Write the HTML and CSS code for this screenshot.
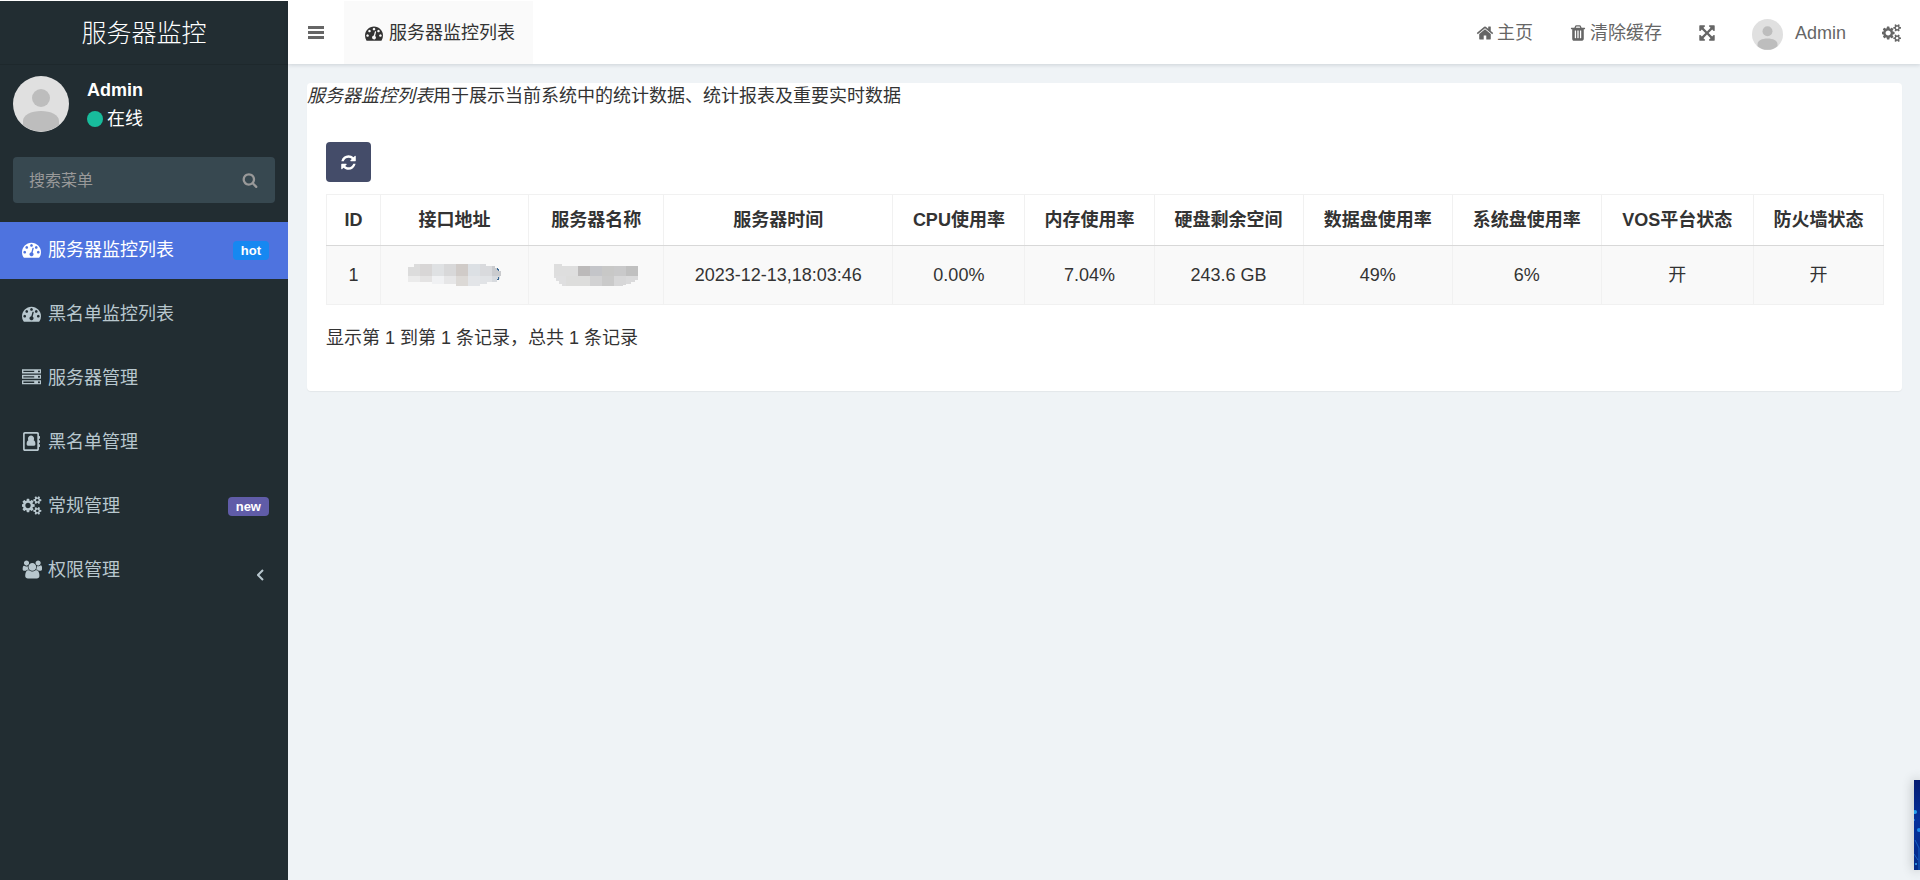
FILE: index.html
```html
<!DOCTYPE html>
<html lang="zh-CN">
<head>
<meta charset="utf-8">
<title>服务器监控</title>
<link rel="stylesheet" href="styles.css">
</head>
<body>
<svg class="sprite" aria-hidden="true">
  <symbol id="i-dash" viewBox="0 0 1792 1792"><path d="M384 1152q0-53-37.5-90.5t-90.5-37.5-90.5 37.5-37.5 90.5 37.5 90.5 90.5 37.5 90.5-37.5 37.5-90.5zm192-448q0-53-37.5-90.5t-90.5-37.5-90.5 37.5-37.5 90.5 37.5 90.5 90.5 37.5 90.5-37.5 37.5-90.5zm428 481l101-382q6-26-7.5-48.5t-38.5-29.5-48 6.5-30 39.5l-101 382q-60 5-107 43.5t-63 98.5q-20 77 20 146t117 89 146-20 89-117q16-60-6-117t-72-91zm660-33q0-53-37.5-90.5t-90.5-37.5-90.5 37.5-37.5 90.5 37.5 90.5 90.5 37.5 90.5-37.5 37.5-90.5zm-640-640q0-53-37.5-90.5t-90.5-37.5-90.5 37.5-37.5 90.5 37.5 90.5 90.5 37.5 90.5-37.5 37.5-90.5zm448 192q0-53-37.5-90.5t-90.5-37.5-90.5 37.5-37.5 90.5 37.5 90.5 90.5 37.5 90.5-37.5 37.5-90.5zm320 448q0 261-141 483-19 29-54 29h-1402q-35 0-54-29-141-221-141-483 0-182 71-348t191-286 286-191 348-71 348 71 286 191 191 286 71 348z"/></symbol>
  <symbol id="i-server" viewBox="0 0 1792 1792"><path d="M128 1408h1024v-128h-1024v128zm0-512h1024v-128h-1024v128zm1568 448q0-40-28-68t-68-28-68 28-28 68 28 68 68 28 68-28 28-68zm-1568-960h1024v-128h-1024v128zm1568 448q0-40-28-68t-68-28-68 28-28 68 28 68 68 28 68-28 28-68zm0-512q0-40-28-68t-68-28-68 28-28 68 28 68 68 28 68-28 28-68zm96 832v384h-1792v-384h1792zm0-512v384h-1792v-384h1792zm0-512v384h-1792v-384h1792z"/></symbol>
  <symbol id="i-book" viewBox="0 0 1792 1792"><path fill-rule="evenodd" d="M260 0h1180q66 0 113 47t47 113v224h64q32 0 32 32v192q0 32-32 32h-64v128h64q32 0 32 32v192q0 32-32 32h-64v128h64q32 0 32 32v192q0 32-32 32h-64v224q0 66-47 113t-113 47h-1180q-66 0-113-47t-47-113v-1472q0-66 47-113t113-47zm28 170q-32 0-32 32v1388q0 32 32 32h1124q32 0 32-32v-1388q0-32-32-32z"/><path d="M850 340q120 0 205 85t85 205q0 80-42 146 80 30 122 130 46 104 46 260 0 136-126 136h-580q-126 0-126-136 0-156 46-260 42-100 122-130-42-66-42-146 0-120 85-205t205-85z"/></symbol>
  <symbol id="i-cogs" viewBox="0 0 1920 1792"><path d="M832 896q0-106-75-181t-181-75-181 75-75 181 75 181 181 75 181-75 75-181zm768 512q0-52-38-90t-90-38-90 38-38 90q0 53 37.5 90.5t90.5 37.5 90.5-37.5 37.5-90.5zm0-1024q0-52-38-90t-90-38-90 38-38 90q0 53 37.5 90.5t90.5 37.5 90.5-37.5 37.5-90.5zm-384 421v185q0 10-7 19.5t-16 10.5l-155 24q-11 35-32 76 34 48 90 115 7 11 7 20 0 12-7 19-23 30-82.5 89.5t-78.5 59.5q-11 0-21-7l-115-90q-37 19-77 31-11 108-23 155-7 24-30 24h-186q-11 0-20-7.5t-10-17.5l-23-153q-34-10-75-31l-118 89q-7 7-20 7-11 0-21-8-144-133-144-160 0-9 7-19 10-14 41-53t47-61q-23-44-35-82l-152-24q-10-1-17-9.5t-7-19.5v-185q0-10 7-19.5t16-10.5l155-24q11-35 32-76-34-48-90-115-7-11-7-20 0-12 7-20 22-30 82-89t79-59q11 0 21 7l115 90q34-18 77-32 11-108 23-154 7-24 30-24h186q11 0 20 7.5t10 17.5l23 153q34 10 75 31l118-89q8-7 20-7 11 0 21 8 144 133 144 160 0 8-7 19-12 16-42 54t-45 60q23 48 34 82l152 23q10 2 17 10.5t7 19.5zm640 533v140q0 16-149 31-12 27-30 52 51 113 51 138 0 4-4 7-122 71-124 71-8 0-46-47t-52-68q-20 2-30 2t-30-2q-14 21-52 68t-46 47q-2 0-124-71-4-3-4-7 0-25 51-138-18-25-30-52-149-15-149-31v-140q0-16 149-31 13-29 30-52-51-113-51-138 0-4 4-7 4-2 35-20t59-34 30-16q8 0 46 46.5t52 67.5q20-2 30-2t30 2q51-71 92-112l6-2q4 0 124 70 4 3 4 7 0 25-51 138 17 23 30 52 149 15 149 31zm0-1024v140q0 16-149 31-12 27-30 52 51 113 51 138 0 4-4 7-122 71-124 71-8 0-46-47t-52-68q-20 2-30 2t-30-2q-14 21-52 68t-46 47q-2 0-124-71-4-3-4-7 0-25 51-138-18-25-30-52-149-15-149-31v-140q0-16 149-31 13-29 30-52-51-113-51-138 0-4 4-7 4-2 35-20t59-34 30-16q8 0 46 46.5t52 67.5q20-2 30-2t30 2q51-71 92-112l6-2q4 0 124 70 4 3 4 7 0 25-51 138 17 23 30 52 149 15 149 31z"/></symbol>
  <symbol id="i-group" viewBox="0 0 1984 1792"><path d="M657 896q-162 5-265 128h-134q-82 0-138-40.5t-56-118.5q0-353 124-353 6 0 43.5 21t97.5 42.5 119 21.5q67 0 133-23-5 37-5 66 0 159 93 287zm1071 637q0 120-73 189.5t-194 69.5h-874q-121 0-194-69.5t-73-189.5q0-53 3.5-103.5t14-109 26.5-108.5 43-97.5 62-81 85.5-53.5 111.5-20q10 0 43 21.5t73 48 107 48 135 21.5 135-21.5 107-48 73-48 43-21.5q61 0 111.5 20t85.5 53.5 62 81 43 97.5 26.5 108.5 14 109 3.5 103.5zm-1024-1277q0 106-75 181t-181 75-181-75-75-181 75-181 181-75 181 75 75 181zm704 384q0 159-112.5 271.5t-271.5 112.5-271.5-112.5-112.5-271.5 112.5-271.5 271.5-112.5 271.5 112.5 112.5 271.5zm576 225q0 78-56 118.5t-138 40.5h-134q-103-123-265-128 93-128 93-287 0-29-5-66 66 23 133 23 59 0 119-21.5t97.5-42.5 43.5-21q124 0 124 353zm-128-609q0 106-75 181t-181 75-181-75-75-181 75-181 181-75 181 75 75 181z"/></symbol>
  <symbol id="i-search" viewBox="0 0 1792 1792"><path d="M1216 832q0-185-131.5-316.5t-316.5-131.5-316.5 131.5-131.5 316.5 131.5 316.5 316.5 131.5 316.5-131.5 131.5-316.5zm512 832q0 52-38 90t-90 38q-54 0-90-38l-343-342q-179 124-399 124-143 0-273.5-55.5t-225-150-150-225-55.5-273.5 55.5-273.5 150-225 225-150 273.5-55.5 273.5 55.5 225 150 150 225 55.5 273.5q0 220-124 399l343 343q37 37 37 90z"/></symbol>
  <symbol id="i-home" viewBox="0 0 1792 1792"><path d="M1472 992v480q0 26-19 45t-45 19h-384v-384h-256v384h-384q-26 0-45-19t-19-45v-480q0-1 .5-3t.5-3l575-474 575 474q1 2 1 6zm223-69l-62 74q-8 9-21 11h-3q-13 0-21-7l-692-577-692 577q-12 8-24 7-13-2-21-11l-62-74q-8-10-7-23.5t11-21.5l719-599q32-26 76-26t76 26l244 204v-195q0-14 9-23t23-9h192q14 0 23 9t9 23v408l219 182q10 8 11 21.5t-7 23.5z"/></symbol>
  <symbol id="i-trash" viewBox="0 0 1792 1792"><path d="M704 1376v-704q0-14-9-23t-23-9h-64q-14 0-23 9t-9 23v704q0 14 9 23t23 9h64q14 0 23-9t9-23zm256 0v-704q0-14-9-23t-23-9h-64q-14 0-23 9t-9 23v704q0 14 9 23t23 9h64q14 0 23-9t9-23zm256 0v-704q0-14-9-23t-23-9h-64q-14 0-23 9t-9 23v704q0 14 9 23t23 9h64q14 0 23-9t9-23zm-544-992h448l-48-117q-7-9-17-11h-317q-10 2-17 11zm928 32v64q0 14-9 23t-23 9h-96v948q0 83-47 143.5t-113 60.5h-832q-66 0-113-58.5t-47-141.5v-952h-96q-14 0-23-9t-9-23v-64q0-14 9-23t23-9h309l70-167q15-37 54-63t79-26h320q40 0 79 26t54 63l70 167h309q14 0 23 9t9 23z"/></symbol>
  <symbol id="i-arrows" viewBox="0 0 1792 1792"><path d="M1411 541l-355 355 355 355 144-144q29-31 70-14 39 17 39 59v448q0 26-19 45t-45 19h-448q-42 0-59-40-17-39 14-69l144-144-355-355-355 355 144 144q31 30 14 69-17 40-59 40h-448q-26 0-45-19t-19-45v-448q0-42 40-59 39-17 69 14l144 144 355-355-355-355-144 144q-19 19-45 19-12 0-24-5-40-17-40-59v-448q0-26 19-45t45-19h448q42 0 59 40 17 39-14 69l-144 144 355 355 355-355-144-144q-31-30-14-69 17-40 59-40h448q26 0 45 19t19 45v448q0 42-39 59-13 5-25 5-26 0-45-19z"/></symbol>
  <symbol id="i-refresh" viewBox="0 0 1792 1792"><path d="M1639 1056q0 5-1 7-64 268-268 434.5t-478 166.5q-146 0-282.5-55t-243.5-157l-129 129q-19 19-45 19t-45-19-19-45v-448q0-26 19-45t45-19h448q26 0 45 19t19 45-19 45l-137 137q71 66 161 102t187 36q134 0 250-65t186-179q11-17 53-117 8-23 30-23h192q13 0 22.5 9.5t9.5 22.5zm25-800v448q0 26-19 45t-45 19h-448q-26 0-45-19t-19-45 19-45l138-138q-148-137-349-137-134 0-250 65t-186 179q-11 17-53 117-8 23-30 23h-199q-13 0-22.5-9.5t-9.5-22.5v-7q65-268 270-434.5t480-166.5q146 0 284 55.5t245 156.5l130-129q19-19 45-19t45 19 19 45z"/></symbol>
  <symbol id="i-bars" viewBox="0 0 16 14"><path d="M0 0h16v3H0zM0 5h16v3H0zM0 10h16v3H0z"/></symbol>
  <symbol id="i-left" viewBox="0 0 8 12"><path d="M6 1L1 6l5 5" fill="none" stroke="currentColor" stroke-width="2"/></symbol>
  <symbol id="i-user" viewBox="0 0 56 56"><circle cx="28" cy="28" r="28" fill="#e0e0e0"/><circle cx="28" cy="22" r="9" fill="#bdbdbd"/><path d="M10 49V45C10 39 18 35 28 35s18 4 18 10v4A28 28 0 0 1 10 49z" fill="#bdbdbd"/></symbol>
</svg>
<div class="app">
  <aside class="sidebar">
    <a class="brand" href="#">服务器监控</a>
    <div class="profile">
      <svg class="avatar"><use href="#i-user"/></svg>
      <div class="who">
        <strong>Admin</strong>
        <span class="status"><i class="dot"></i>在线</span>
      </div>
    </div>
    <form class="search">
      <input type="text" placeholder="搜索菜单" aria-label="搜索菜单">
      <button type="button" aria-label="搜索"><svg class="icon"><use href="#i-search"/></svg></button>
    </form>
    <nav class="menu">
      <a class="active" href="#"><svg class="icon"><use href="#i-dash"/></svg>服务器监控列表<span class="badge hot">hot</span></a>
      <a href="#"><svg class="icon"><use href="#i-dash"/></svg>黑名单监控列表</a>
      <a href="#"><svg class="icon"><use href="#i-server"/></svg>服务器管理</a>
      <a href="#"><svg class="icon"><use href="#i-book"/></svg>黑名单管理</a>
      <a href="#"><svg class="icon wide"><use href="#i-cogs"/></svg>常规管理<span class="badge new">new</span></a>
      <a href="#"><svg class="icon wide"><use href="#i-group"/></svg>权限管理<svg class="caret"><use href="#i-left"/></svg></a>
    </nav>
  </aside>
  <div class="page">
    <header class="topbar">
      <button class="toggle" type="button" aria-label="切换菜单"><svg><use href="#i-bars"/></svg></button>
      <a class="tab" href="#"><svg class="icon"><use href="#i-dash"/></svg>服务器监控列表</a>
      <nav class="tools">
        <a href="#"><svg class="icon"><use href="#i-home"/></svg>主页</a>
        <a href="#"><svg class="icon"><use href="#i-trash"/></svg>清除缓存</a>
        <a href="#" aria-label="全屏"><svg class="icon"><use href="#i-arrows"/></svg></a>
        <a class="account" href="#"><svg class="avatar"><use href="#i-user"/></svg>Admin</a>
        <a href="#" aria-label="设置"><svg class="icon cogs"><use href="#i-cogs"/></svg></a>
      </nav>
    </header>
    <main class="panel">
      <p class="lead"><em>服务器监控列表</em>用于展示当前系统中的统计数据、统计报表及重要实时数据</p>
      <div class="content">
        <button class="refresh" type="button" aria-label="刷新"><svg><use href="#i-refresh"/></svg></button>
        <table>
          <colgroup><col class="c-id"><col class="c-url"><col class="c-name"><col class="c-time"><col class="c-cpu"><col class="c-mem"><col class="c-disk"><col class="c-disk"><col class="c-disk"><col class="c-vos"><col class="c-fw"></colgroup>
          <thead>
            <tr><th>ID</th><th>接口地址</th><th>服务器名称</th><th>服务器时间</th><th>CPU使用率</th><th>内存使用率</th><th>硬盘剩余空间</th><th>数据盘使用率</th><th>系统盘使用率</th><th>VOS平台状态</th><th>防火墙状态</th></tr>
          </thead>
          <tbody>
            <tr>
              <td>1</td>
              <td><svg class="mask-a" viewBox="0 0 93 22" shape-rendering="crispEdges">
                <path fill="#dcdcdc" d="M0 3h6V0h6v12H0z"/><path fill="#d8d6d6" d="M12 0h12v12H12z"/><path fill="#dfe1e3" d="M24 0h12v12H24z"/><path fill="#d8d8d9" d="M36 0h12v12H36z"/><path fill="#d0cbc8" d="M48 0h12v12H48z"/><path fill="#dce0e4" d="M60 0h12v12H60z"/><path fill="#d9dadd" d="M72 0h6v2h6v10H72z"/><path fill="#cacbce" d="M84 2h3v2h3v3h3v5h-9z"/>
                <path fill="#ebebeb" d="M0 12h12v6H0z"/><path fill="#e4e3e3" d="M12 12h12v6H12z"/><path fill="#f0f1f3" d="M24 12h12v8H24z"/><path fill="#e6e6e7" d="M36 12h12v8H36z"/><path fill="#dcd9d6" d="M48 12h12v10H48z"/><path fill="#e3e5e8" d="M60 12h12v10H60z"/><path fill="#e1e3e6" d="M72 12h12v6h-5v2h-7z"/><path fill="#d7dade" d="M84 12h8v3h-3v3h-5z"/><path fill="#3d6a94" d="M89 4h1v1h1v2h-1zM90 13h1v3h-2v-1h1z"/>
              </svg></td>
              <td><svg class="mask-b" viewBox="0 0 84 22" shape-rendering="crispEdges">
                <path fill="#dedede" d="M0 0h8v2h4v10H0zM12 2h12v10H12z"/><path fill="#bcbaba" d="M24 2h12v10H24z"/><path fill="#c4c5c9" d="M36 2h12v10H36z"/><path fill="#c8c8c7" d="M48 2h12v10H48z"/><path fill="#c9c9ca" d="M60 2h12v10H60z"/><path fill="#c0c0c0" d="M72 2h12v10H72z"/>
                <path fill="#dfdfe0" d="M0 12h12v10H8v-2H5v-3H2v-3H0z"/><path fill="#dddddc" d="M12 12h24v10H12z"/><path fill="#d2d2d3" d="M36 12h12v10H36z"/><path fill="#cacaca" d="M48 12h12v10H48z"/><path fill="#d7d7d8" d="M60 12h12v9h-3v1h-9z"/><path fill="#dadadb" d="M72 12h12v4h-3v2h-4v2h-5z"/>
              </svg></td>
              <td>2023-12-13,18:03:46</td><td>0.00%</td><td>7.04%</td><td>243.6 GB</td><td>49%</td><td>6%</td><td>开</td><td>开</td>
            </tr>
          </tbody>
        </table>
        <p class="count">显示第 1 到第 1 条记录，总共 1 条记录</p>
      </div>
    </main>
  </div>
</div>
<svg class="side-art" viewBox="0 0 6 90">
  <defs><linearGradient id="deep" x1="0" y1="0" x2="0" y2="1"><stop offset="0" stop-color="#071c72"/><stop offset=".45" stop-color="#04309c"/><stop offset="1" stop-color="#052b88"/></linearGradient></defs>
  <path fill="url(#deep)" d="M0 0h6v90H0z"/><circle cx="1" cy="32" r="2" fill="#25a0ee"/><circle cx="0" cy="40" r="1" fill="#2080dc"/><circle cx="5" cy="50" r="2" fill="#1e8bea"/><path d="M1 60l4 8v22M0 74l4 6" fill="none" stroke="#1762c4"/><circle cx="2" cy="84" r="1" fill="#39a9ef"/>
</svg>
</body>
</html>
```
FILE: styles.css
```css
* { box-sizing: border-box; }
body {
  margin: 0;
  border-top: 1px solid #fff;
  background: #eff3f6;
  color: #333;
  font: 18px/26px "Liberation Sans", "Noto Sans CJK SC", sans-serif;
}
a { color: inherit; text-decoration: none; }
p { margin: 0; }
button, input { font: inherit; color: inherit; border: 0; background: none; padding: 0; margin: 0; }
svg { display: block; flex: none; fill: currentColor; }
.sprite { position: absolute; width: 0; height: 0; }
.app { display: flex; min-height: calc(100vh - 1px); }

.sidebar { flex: none; width: 288px; background: #222d32; color: #b8c7ce; }
.brand {
  display: flex; align-items: center; justify-content: center;
  height: 64px; border-bottom: 1px solid #1e282c;
  color: #fff; font-size: 25px; font-weight: 300;
}
.profile { display: flex; gap: 18px; padding: 11px 13px 0; color: #fff; }
.avatar { width: 56px; height: 56px; }
.who { display: flex; flex-direction: column; gap: 3px; padding-top: 1px; }
.status { display: flex; align-items: center; gap: 4px; }
.dot { width: 16px; height: 16px; border-radius: 50%; background: #18bc9c; }
.search {
  display: flex; align-items: center; height: 46px; margin: 25px 13px 19px;
  padding: 0 17px 0 16px; border-radius: 4px; background: #374850; color: #999;
}
.search input { flex: 1; min-width: 0; padding-top: 2px; font-size: 16px; outline: 0; }
.search input::placeholder { color: #999; opacity: 1; }
.search .icon { width: 16px; height: 16px; }
.menu { display: flex; flex-direction: column; gap: 7px; }
.menu a { display: flex; align-items: center; height: 57px; padding: 0 19px 2px 22px; }
.menu .icon { width: 19px; height: 19px; margin-right: 7px; }
.menu .wide { width: 20px; margin-right: 6px; }
.menu .active { background: #4e73df; color: #fff; }
.badge {
  margin: 2px 0 0 auto; padding: 0 8px; border-radius: 4px;
  color: #fff; font-size: 13px; font-weight: 700; line-height: 19px;
}
.hot { background: #1688f1; }
.new { background: #605ca8; }
.caret { width: 8px; height: 12px; margin: 10px 4px 0 auto; }

.page { flex: 1; min-width: 0; }
.topbar { display: flex; height: 63px; background: #fff; box-shadow: 0 1px 4px rgba(0, 21, 41, .15); color: #666; }
.toggle { padding: 0 20px; }
.toggle svg { width: 16px; height: 14px; }
.tab { display: flex; align-items: center; gap: 6px; padding: 0 18px 0 21px; background: #fafafa; color: #333; }
.tab .icon { width: 18px; height: 18px; }
.tools { display: flex; margin-left: auto; }
.tools a { display: flex; align-items: center; gap: 3px; padding: 0 18px; }
.tools .icon { width: 18px; height: 18px; }
.tools .cogs { width: 20px; }
.tools .account { gap: 12px; }
.tools .avatar { width: 31px; height: 31px; margin-top: 4px; }

.panel { margin: 19px 18px 0 19px; border-radius: 4px; background: #fff; box-shadow: 0 1px 1px rgba(0, 0, 0, .05); }
.content { padding: 33px 18px 40px 19px; }
.refresh { display: grid; place-items: center; width: 45px; height: 40px; margin-bottom: 12px; border-radius: 4px; background: #444c69; color: #fff; }
.refresh svg { width: 17px; height: 17px; }
table { width: 100%; table-layout: fixed; border-collapse: collapse; text-align: center; }
th, td { padding: 0; border: 1px solid #f1f1f1; }
th { height: 51px; border-bottom-color: #d8d8d8; }
td { height: 59px; background: #f9f9f9; }
td svg { margin: 0 auto; }
.mask-a { width: 93px; height: 22px; }
.mask-b { width: 84px; height: 22px; }
.c-id { width: 54px; }
.c-url { width: 148px; }
.c-name { width: 135px; }
.c-time { width: 229px; }
.c-cpu { width: 132px; }
.c-mem { width: 129px; }
.c-disk { width: 149px; }
.c-vos { width: 152px; }
.c-fw { width: 130px; }
.count { margin-top: 20px; }
.side-art { position: fixed; right: 0; bottom: 10px; width: 6px; height: 90px; box-shadow: 0 0 12px rgba(0, 0, 0, .3); }
```
